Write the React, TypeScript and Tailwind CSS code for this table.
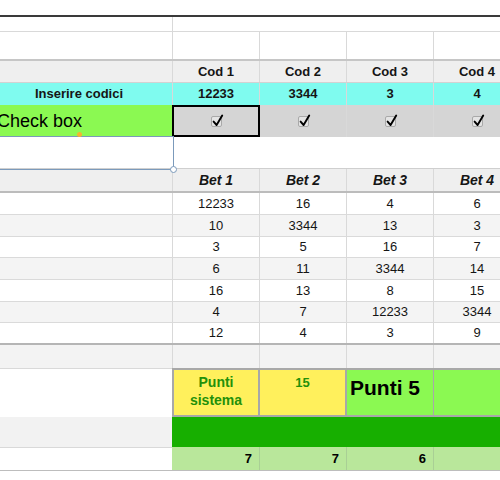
const codes = ['12233', '3344', '3', '4'];

const bets = [
  ['12233', '16', '4', '6'],
  ['10', '3344', '13', '3'],
  ['3', '5', '16', '7'],
  ['6', '11', '3344', '14'],
  ['16', '13', '8', '15'],
  ['4', '7', '12233', '3344'],
  ['12', '4', '3', '9'],
];

const betHeights = ['h-[22px]', 'h-[22px]', 'h-[21px]', 'h-[22px]', 'h-[22px]', 'h-[21px]', 'h-[22px]'];

const C0 = 'w-[187px] shrink-0 border-r border-[#d9d9d9]';
const C = 'flex w-[87px] shrink-0 items-center justify-center border-r border-[#d9d9d9]';

function Checkbox() {
  return (
    <div className="relative h-[11px] w-[11px] rounded-[2px] border border-[#a9a9a9] bg-[#e4e4e4]">
      <svg className="absolute left-[0px] top-[-3px]" width="12" height="13" viewBox="0 0 12 13" fill="none">
        <path d="M1.6 7.6 L4.6 11 L10.2 1.6" stroke="#000" strokeWidth="1.9" strokeLinecap="round" strokeLinejoin="round" />
      </svg>
    </div>
  );
}

export default function App() {
  return (
    <div className="relative h-[480px] w-[500px] overflow-hidden bg-white font-['Liberation_Sans',Arial,sans-serif] text-[13px] text-[#151515]">
      <div className="ml-[-14px] w-[535px]">
        {/* top bar */}
        <div className="h-[17px] border-b-2 border-[#3a3a3a]" />

        <div className="flex h-[15px] border-b border-[#d9d9d9]">
          <div className={C0} />
          <div className="flex-1" />
        </div>

        <div className="flex h-[29px] border-b-2 border-[#c6c6c6]">
          <div className={C0} />
          {[0, 1, 2, 3].map((i) => (
            <div key={i} className={C} />
          ))}
        </div>

        {/* Cod header */}
        <div className="flex h-[22px] border-b border-[#d2d2d2] bg-[#efefef] font-bold">
          <div className={C0} />
          {[1, 2, 3, 4].map((i) => (
            <div key={i} className={C}>Cod {i}</div>
          ))}
        </div>

        {/* codes */}
        <div className="flex h-[22px] bg-[#7ffbef] font-bold">
          <div className={`${C0} flex items-center justify-center border-[#9ee]`}>Inserire codici</div>
          {codes.map((c, i) => (
            <div key={i} className={`${C} border-[#9ee]`}>{c}</div>
          ))}
        </div>

        {/* check boxes */}
        <div className="flex h-[32px]">
          <div className="flex w-[187px] shrink-0 items-center bg-[#8bf952] pl-[11px] text-[18px] text-black">Check box</div>
          {[0, 1, 2, 3].map((i) => (
            <div key={i} className={`${C} border-[#bdbdbd] bg-[#d5d5d5]`}>
              <Checkbox />
            </div>
          ))}
        </div>

        <div className="h-[32px] border-b border-[#cfcfcf]" />

        {/* Bet header */}
        <div className="flex h-[24px] border-b-2 border-[#bcbcbc] bg-[#efefef] text-[14px] font-bold italic">
          <div className={`${C0} border-[#a3a3a3]`} />
          {[1, 2, 3, 4].map((i) => (
            <div key={i} className={C}>Bet {i}</div>
          ))}
        </div>

        {bets.map((row, r) => (
          <div
            key={r}
            className={`flex ${betHeights[r]} ${r % 2 === 1 ? 'bg-[#f4f4f4]' : 'bg-white'} ${
              r === bets.length - 1 ? 'border-b-2 border-[#b5b5b5]' : 'border-b border-[#dadada]'
            }`}
          >
            <div className={`${C0} border-[#a3a3a3]`} />
            {row.map((v, i) => (
              <div key={i} className={C}>{v}</div>
            ))}
          </div>
        ))}

        <div className="flex h-[23px] bg-[#f3f3f3]">
          <div className={C0} />
          {[0, 1, 2, 3].map((i) => (
            <div key={i} className={C} />
          ))}
        </div>

        {/* points */}
        <div className="flex h-[49px]">
          <div className="w-[186px] shrink-0 border-t border-[#d9d9d9]" />
          <div className="w-[88px] shrink-0 border-2 border-[#a8a8a8] bg-[#fff05c] pt-[3px] text-center text-[14px] font-bold leading-[18px] text-[#23900a]">
            Punti
            <br />
            sistema
          </div>
          <div className="w-[87px] shrink-0 border-y-2 border-r-2 border-[#a8a8a8] bg-[#fff05c] pt-[5px] text-center text-[13px] font-bold leading-[16px] text-[#23900a]">
            15
          </div>
          <div className="w-[87px] shrink-0 border-y-2 border-r border-[#a8a8a8] bg-[#8bf952] pl-[3px] pt-[6px] text-[21px] font-bold leading-[24px] text-black">
            <span className="whitespace-nowrap">Punti 5</span>
          </div>
          <div className="flex-1 border-y-2 border-[#a8a8a8] bg-[#8bf952]" />
        </div>

        <div className="flex h-[30px]">
          <div className="w-[186px] shrink-0 bg-[#f2f2f2]" />
          <div className="flex-1 bg-[#17af00]" />
        </div>

        <div className="flex h-[24px] border-b border-[#bdbdbd] font-bold">
          <div className="w-[186px] shrink-0 border-t border-[#d9d9d9]" />
          {['7', '7', '6', ''].map((v, i) => (
            <div
              key={i}
              className={`flex ${i === 0 ? 'w-[88px]' : 'w-[87px]'} shrink-0 items-center justify-end border-r border-[#a9cf95] bg-[#b9e79b] pr-[7px] text-black`}
            >
              {v}
            </div>
          ))}
        </div>
      </div>

      {/* selected cell */}
      <div className="absolute left-[172px] top-[105px] h-[32px] w-[88px] border-2 border-black" />

      {/* selection frame */}
      <div className="absolute left-[-14px] top-[136px] h-[34px] w-[188px] border border-[#7b9abb]" />
      <div className="absolute left-[170px] top-[166px] h-[7px] w-[7px] rounded-full border border-[#7b9abb] bg-white" />
      <div className="absolute left-[77px] top-[132px] h-[5px] w-[5px] rounded-full bg-[#f5b530]" />
    </div>
  );
}
